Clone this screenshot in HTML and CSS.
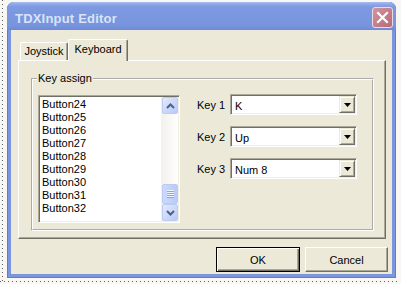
FILE: index.html
```html
<!DOCTYPE html>
<html>
<head>
<meta charset="utf-8">
<link rel="stylesheet" href="styles.css">
</head>
<body>
<div class="window">
  <div class="titlebar">
    <span class="title">TDXInput Editor</span>
    <span class="close"><svg width="19" height="19" viewBox="0 0 19 19"><path d="M5 5 L14 14 M14 5 L5 14" stroke="#fff" stroke-width="2.2" stroke-linecap="square"/></svg></span>
  </div>
  <div class="client">
    <div class="tabs">
      <div class="tab">Joystick</div>
      <div class="tab active">Keyboard</div>
    </div>
    <div class="panel">
      <fieldset class="group">
        <legend>Key assign</legend>
        <div class="group-body">
          <div class="listbox">
            <ul class="items">
              <li>Button24</li>
              <li>Button25</li>
              <li>Button26</li>
              <li>Button27</li>
              <li>Button28</li>
              <li>Button29</li>
              <li>Button30</li>
              <li>Button31</li>
              <li>Button32</li>
            </ul>
            <div class="scrollbar">
              <div class="sb-btn"><svg width="9" height="6" viewBox="0 0 9 6"><path d="M1 5 L4.5 1.5 L8 5" fill="none" stroke="#4d6185" stroke-width="2"/></svg></div>
              <div class="sb-track">
                <div class="sb-thumb"><svg width="7" height="8" viewBox="0 0 7 8"><path d="M0 0.5H7M0 2.5H7M0 4.5H7M0 6.5H7" stroke="#eef3fe" stroke-width="1"/><path d="M0 1.5H7M0 3.5H7M0 5.5H7M0 7.5H7" stroke="#8da6e6" stroke-width="1"/></svg></div>
              </div>
              <div class="sb-btn"><svg width="9" height="6" viewBox="0 0 9 6"><path d="M1 1 L4.5 4.5 L8 1" fill="none" stroke="#4d6185" stroke-width="2"/></svg></div>
            </div>
          </div>
          <div class="keys">
            <div class="key-row">
              <span class="key-label">Key 1</span>
              <div class="combo"><span class="combo-text">K</span><span class="combo-btn"><svg width="7" height="4" viewBox="0 0 7 4"><path d="M0 0H7L3.5 4Z" fill="#000"/></svg></span></div>
            </div>
            <div class="key-row">
              <span class="key-label">Key 2</span>
              <div class="combo"><span class="combo-text">Up</span><span class="combo-btn"><svg width="7" height="4" viewBox="0 0 7 4"><path d="M0 0H7L3.5 4Z" fill="#000"/></svg></span></div>
            </div>
            <div class="key-row">
              <span class="key-label">Key 3</span>
              <div class="combo"><span class="combo-text">Num 8</span><span class="combo-btn"><svg width="7" height="4" viewBox="0 0 7 4"><path d="M0 0H7L3.5 4Z" fill="#000"/></svg></span></div>
            </div>
          </div>
        </div>
      </fieldset>
    </div>
    <div class="buttons">
      <button class="btn default">OK</button>
      <button class="btn cancel">Cancel</button>
    </div>
  </div>
</div>
</body>
</html>
```
FILE: styles.css
```css
html, body {
  margin: 0;
}
body {
  width: 401px;
  height: 284px;
  box-sizing: border-box;
  padding: 2px 0 0 7px;
  overflow: hidden;
  background-color: #f8f7f3;
  background-image:
    repeating-linear-gradient(to bottom, #5e5e5e 0 1px, transparent 1px 4px),
    repeating-linear-gradient(to right, #5e5e5e 0 1px, transparent 1px 4px);
  background-size: 1px 282px, 398px 1px;
  background-position: 2px 0, 0 281px;
  background-repeat: no-repeat;
  font-family: "Liberation Sans", Arial, sans-serif;
  font-size: 11px;
  color: #000;
}
.window {
  width: 389px;
  height: 276px;
  display: flex;
  flex-direction: column;
  background: #7b96df;
  border-radius: 7px 7px 0 0;
  box-shadow: inset 1px 0 #6479d2, inset -1px 0 #6479d2, inset 0 -1px #6479d2;
  overflow: hidden;
}
.titlebar {
  flex: none;
  height: 28px;
  display: flex;
  align-items: flex-start;
  padding: 0 3px 0 8px;
  background: linear-gradient(to bottom, #a9bff1 0, #8fa9ea 2px, #7d99e1 5px, #7894dd 24px, #6e89d7 28px);
}
.title {
  flex: 1;
  margin-top: 9px;
  font-weight: bold;
  font-size: 13px;
  line-height: 15px;
  letter-spacing: 0.2px;
  color: #d8e4f8;
}
.close {
  margin-top: 5px;
  width: 21px;
  height: 21px;
  box-sizing: border-box;
  border: 1px solid #eadbe2;
  border-radius: 3px;
  background: linear-gradient(135deg, #d3949e, #b8697a);
  display: flex;
  align-items: center;
  justify-content: center;
}
.client {
  flex: 1;
  margin: 0 4px 4px;
  background: #ece9d8;
  display: flex;
  flex-direction: column;
  padding: 9px 6px 2px 7px;
}
.tabs {
  flex: none;
  height: 21px;
  display: flex;
  align-items: flex-end;
  padding-left: 2px;
  position: relative;
  z-index: 1;
}
.tab {
  box-sizing: border-box;
  width: 48px;
  height: 18px;
  border: 1px solid;
  border-color: #fff #716f64 transparent #fff;
  border-bottom: none;
  border-radius: 2px 2px 0 0;
  box-shadow: inset -1px 0 #aca899;
  text-align: center;
  line-height: 16px;
}
.tab.active {
  width: 60px;
  height: 22px;
  margin-bottom: -1px;
  background: #ece9d8;
  line-height: 18px;
}
.panel {
  flex: none;
  box-sizing: border-box;
  height: 179px;
  border: 1px solid;
  border-color: #fff #716f64 #716f64 #fff;
  box-shadow: inset -1px -1px #aca899;
  padding: 11px 0 0 12px;
}
.group {
  box-sizing: border-box;
  width: 343px;
  height: 159px;
  margin: 0;
  padding: 10px 5px 0 5px;
  border: 2px groove #fff;
}
.group legend {
  padding: 0 1px;
  margin-left: -1px;
  line-height: 13px;
}
.group-body {
  display: flex;
  align-items: flex-start;
}
.listbox {
  box-sizing: border-box;
  width: 142px;
  height: 128px;
  display: flex;
  padding: 1px;
  border: 1px solid;
  border-color: #aca899 #fff #fff #aca899;
  box-shadow: inset 1px 1px #716f64, inset -1px -1px #f1efe2;
  background: #fff;
}
.items {
  flex: 1;
  margin: 0;
  padding: 1px 0 0 2px;
  list-style: none;
  line-height: 13px;
}
.scrollbar {
  width: 17px;
  display: flex;
  flex-direction: column;
  background: linear-gradient(to right, #f3f1ec, #fefefe);
}
.sb-btn {
  flex: none;
  height: 17px;
  box-sizing: border-box;
  margin: 0 0 0 1px;
  border: 1px solid #bccbf2;
  border-radius: 2px;
  background: linear-gradient(135deg, #e2eafe, #b7c9f6);
  display: flex;
  align-items: center;
  justify-content: center;
}
.sb-track {
  flex: 1;
  display: flex;
  flex-direction: column;
  justify-content: flex-end;
}
.sb-thumb {
  height: 20px;
  box-sizing: border-box;
  margin-left: 1px;
  border: 1px solid #bccbf2;
  border-radius: 2px;
  background: linear-gradient(to right, #cad9fd, #b9cbf7);
  display: flex;
  align-items: center;
  justify-content: center;
}
.keys {
  margin: -1px 0 0 17px;
  display: flex;
  flex-direction: column;
  gap: 11px;
}
.key-row {
  display: flex;
  align-items: flex-start;
  height: 21px;
}
.key-label {
  width: 33px;
  padding-top: 5px;
  line-height: 13px;
}
.combo {
  box-sizing: border-box;
  width: 127px;
  height: 21px;
  display: flex;
  padding: 1px;
  border: 1px solid;
  border-color: #aca899 #fff #fff #aca899;
  box-shadow: inset 1px 1px #716f64, inset -1px -1px #f1efe2;
  background: #fff;
}
.combo-text {
  flex: 1;
  padding: 3px 0 0 3px;
  line-height: 14px;
}
.combo-btn {
  box-sizing: border-box;
  width: 16px;
  height: 17px;
  border: 1px solid;
  border-color: #ece9d8 #716f64 #716f64 #ece9d8;
  box-shadow: inset 1px 1px #fff, inset -1px -1px #aca899;
  background: #ece9d8;
  display: flex;
  align-items: center;
  justify-content: center;
}
.buttons {
  flex: none;
  margin: 8px -4px 0 0;
  display: flex;
  justify-content: flex-end;
  gap: 5px;
  padding-right: 2px;
}
.btn {
  box-sizing: border-box;
  height: 25px;
  margin: 0;
  padding: 0;
  font-family: "Liberation Sans", Arial, sans-serif;
  font-size: 11px;
  color: #000;
  background: #ece9d8;
  border: 1px solid;
  border-color: #fff #716f64 #716f64 #fff;
  box-shadow: inset -1px -1px #aca899;
  border-radius: 0;
}
.btn.default {
  width: 84px;
  border-color: #000;
  box-shadow: inset 1px 1px #fff, inset -1px -1px #716f64, inset -2px -2px #aca899;
}
.btn.cancel {
  width: 83px;
}
```
